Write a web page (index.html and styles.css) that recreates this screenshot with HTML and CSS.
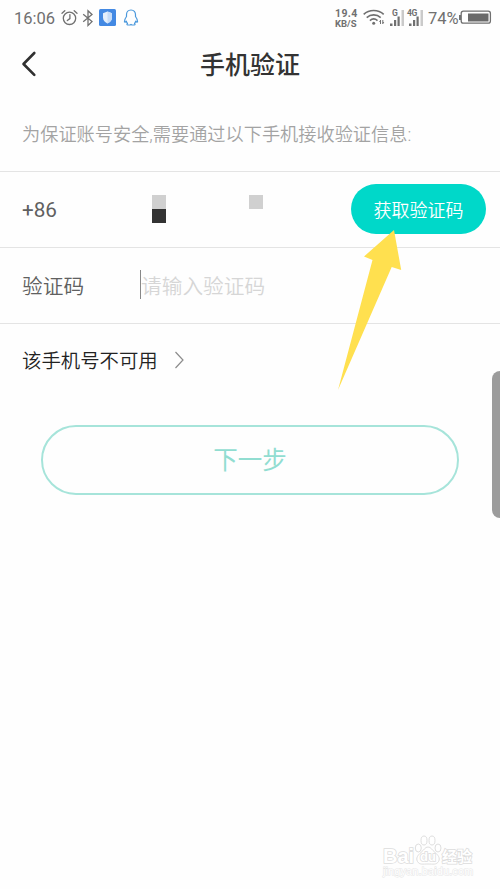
FILE: index.html
```html
<!DOCTYPE html>
<html lang="zh-CN">
<head>
<meta charset="utf-8">
<title>手机验证</title>
<link rel="stylesheet" href="styles.css">
</head>
<body>
<div class="status">
  <span class="time">16:06</span>
  <svg class="alarm" width="17" height="18" viewBox="0 0 17 18" fill="none" stroke="#707070" stroke-width="1.3" stroke-linecap="round"><circle cx="8.5" cy="9.3" r="6.2"/><path d="M8.9 5.6v4l-2.6 2M1 4.2 3.8 1.7M13.2 1.7 16 4.2"/></svg>
  <svg class="bt" width="12" height="18" viewBox="0 0 12 18" fill="none" stroke="#707070" stroke-width="1.3"><path d="M1.2 5.2 10 12.600 6 16.400V1.800L10 5.400 1.200 12.800"/></svg>
  <svg class="shield" width="17" height="17" viewBox="0 0 17 17"><rect width="17" height="17" rx="1.5" fill="#4389e3"/><path d="M8.500 2.500 13 4.200v4.600c0 2.800-2.200 4.700-4.500 5.700C6.200 13.500 4 11.600 4 8.800V4.200z" fill="#e4effc"/><path d="M8.500 2.500 13 4.200v4.600c0 2.800-2.200 4.700-4.500 5.700z" fill="#c6dcf8"/></svg>
  <svg class="qq" width="16" height="17" viewBox="0 0 16 17" fill="none" stroke="#4a98dc" stroke-width="1.200" stroke-linejoin="round"><path d="M8 1C5 1 3.500 3.100 3.500 5.800v1.700C2.200 9.200 1.200 11 1.400 13l.9.200 1-1c.2 1 .6 1.700 1.200 2.300-.8.400-.8 1.500.3 1.500h2c.8 0 .8-.7 1.200-.7s.4.700 1.200.7h2c1.100 0 1.100-1.100.3-1.500.6-.6 1-1.300 1.200-2.300l1 1 .9-.2c.2-2-.8-3.800-2.100-5.500V5.800C12.500 3.100 11 1 8 1z"/></svg>
  <span class="speed"><span>19.4</span><span class="unit">KB/S</span></span>
  <svg class="wifi" width="22" height="17" viewBox="0 0 22 17" fill="none" stroke="#707070" stroke-width="1.600"><path d="M.7 5.300c5.500-5 14.500-5 20 0M3.700 8.600c4-3.600 10-3.600 14 0M6.900 11.600c2.300-2 5.300-2 7.600 0"/><circle cx="10.700" cy="14.200" r="1.500" fill="#707070" stroke="none"/><path d="M17.500 11v4M19.800 11v4" stroke-width="1"/><path d="m16 13 1.500-2v2zM21.300 13l-1.500 2v-2z" fill="#707070" stroke="none"/></svg>
  <span class="signal"><i class="net">G</i><svg width="14" height="18" viewBox="0 0 14 18"><path fill="#707070" d="M0 14.500h2.500V17H0zM4 11h2.200v6H4zM7.500 7.500h2.200V17H7.500z"/><path fill="#cacaca" d="M11.500 1H14v16h-2.500z"/></svg></span>
  <span class="signal lte"><i class="net">4G</i><svg width="14" height="18" viewBox="0 0 14 18"><path fill="#707070" d="M0 14.500h2.500V17H0zM4 11h2.200v6H4zM7.500 7.500h2.200V17H7.500z"/><path fill="#cacaca" d="M11.500 1H14v16h-2.500z"/></svg></span>
  <span class="percent">74%</span>
  <svg class="battery" width="33" height="15" viewBox="0 0 33 15"><path d="M0 5h2v5H0z" fill="#707070"/><rect x="2.200" y="1.200" width="29.200" height="12" rx="2.200" fill="none" stroke="#707070" stroke-width="1.300"/><path d="M9 3.500h20.500v8H9z" fill="#6a6a6a"/></svg>
</div>
<header class="header">
  <svg class="back" width="16" height="28" viewBox="0 0 16 28" fill="none" stroke="#303030" stroke-width="2.600" stroke-linecap="round" stroke-linejoin="round"><path d="M13.300 3 2.500 14l10.800 10.800"/></svg>
  <h1>手机验证</h1>
</header>
<main>
  <p class="hint">为保证账号安全,需要通过以下手机接收验证信息:</p>
  <section class="row">
    <span class="label code">+86</span>
    <span class="number"><i class="mask"></i><i class="mask short"></i></span>
    <button class="get">获取验证码</button>
  </section>
  <section class="row">
    <span class="label">验证码</span>
    <span class="field">请输入验证码</span>
  </section>
  <a class="unavailable">该手机号不可用<svg width="11" height="18" viewBox="0 0 11 18" fill="none" stroke="#8c8c8c" stroke-width="1.200"><path d="m1.500 1 7.500 8-7.500 8"/></svg></a>
  <button class="next">下一步</button>
</main>
<svg class="arrow" width="68" height="162" viewBox="0 0 68 162"><path d="M59 1 66.200 41l-9.500-3L3 161 37.500 31 29 27.500z" fill="#ffe04f"/></svg>
<div class="handle"></div>
<div class="watermark">
  <div class="brand"><span class="bai">Bai</span><svg class="paw" width="28" height="30" viewBox="0 0 28 30" fill="#fff" stroke="#dedede" stroke-width="1"><ellipse cx="4.300" cy="13" rx="3" ry="4"/><ellipse cx="10" cy="5.500" rx="3" ry="4.500"/><ellipse cx="18" cy="5.500" rx="3" ry="4.500"/><ellipse cx="24" cy="13" rx="3" ry="4"/><path d="M14 12c-3 0-4 3-7 5.500S1.500 23 3.500 26.500 9 29 14 29s8.500 1 10.500-2.500-.5-6.500-3.500-9S17 12 14 12z"/></svg><span class="cn">经验</span><b class="du">du</b></div>
  <div class="url">jingyan.baidu.com</div>
</div>
</body>
</html>
```
FILE: styles.css
```css
* { box-sizing: border-box; }
body {
  margin: 0;
  position: relative;
  height: 889px;
  overflow: hidden;
  background: #fefefe;
  color: #333;
  font-family: Roboto, "Noto Sans CJK SC", sans-serif;
}
i { font-style: normal; }
button { font-family: inherit; padding: 0; }
svg { flex: none; display: block; }

.status {
  display: flex;
  align-items: center;
  height: 35px;
  padding: 0 8px 0 14px;
  color: #707070;
}
.time { width: 47px; font-size: 16.5px; line-height: 20px; padding-top: 2px; }
.bt { margin-left: 4px; }
.shield { margin-left: 5px; }
.qq { margin-left: 7px; }
.speed {
  display: flex;
  flex-direction: column;
  margin-left: auto;
  width: 28px;
  padding-top: 1px;
  font-size: 10.500px;
  font-weight: 700;
  line-height: 10px;
  letter-spacing: .4px;
  white-space: nowrap;
}
.speed .unit { font-size: 9.500px; line-height: 9px; letter-spacing: 0; }
.signal { position: relative; margin-left: 5px; }
.net {
  position: absolute;
  left: 2px;
  top: 0;
  font-size: 8.500px;
  font-weight: 700;
  line-height: 8px;
  letter-spacing: -.4px;
}
.lte .net { left: -2px; }
.percent { margin-left: 5px; width: 31px; font-size: 16.500px; line-height: 20px; padding-top: 2px; }

.header {
  display: grid;
  grid-template-columns: 40px 1fr 40px;
  align-items: center;
  height: 58px;
}
.back { margin-left: 21px; }
h1 { margin: 0; padding-top: 3px; text-align: center; font-size: 25px; font-weight: 500; line-height: 36px; }

.hint {
  margin: 0;
  height: 79px;
  padding: 28px 22px 0;
  border-bottom: 1px solid #e4e4e4;
  font-size: 18.200px;
  line-height: 28px;
  font-weight: 350;
  color: #a3a3a3;
  white-space: nowrap;
}
.row {
  display: flex;
  align-items: center;
  height: 76px;
  padding: 0 14px 2px 22px;
  border-bottom: 1px solid #e4e4e4;
}
.label { width: 118px; font-size: 20.700px; line-height: 30px; padding-top: 4px; color: #606060; font-weight: 350; }
.code { font-weight: 400; padding-top: 2px; }
.number { display: flex; gap: 83px; padding-left: 12px; }
.mask { width: 14px; height: 28px; background: linear-gradient(#d0d0d0 50%, #333 50%); }
.mask.short { height: 14px; background: #d0d0d0; }
.get {
  margin-left: auto;
  width: 135px;
  height: 50px;
  border: 0;
  border-radius: 25px;
  background: #00d8c9;
  color: #fff;
  font-size: 18px;
  font-weight: 350;
}
.field {
  border-left: 1px solid #888;
  height: 29px;
  line-height: 34px;
  font-size: 20.700px;
  font-weight: 350;
  color: #d6d6d6;
}
.unavailable {
  display: flex;
  align-items: center;
  gap: 16px;
  height: 71px;
  padding-left: 22px;
  font-size: 19.400px;
  font-weight: 350;
  color: #222;
}
.next {
  display: block;
  margin: 30px 41px 0;
  width: 418px;
  height: 70px;
  padding-bottom: 3px;
  border: 2px solid #a6e4da;
  border-radius: 35px;
  background: transparent;
  color: #91ddd1;
  font-size: 24.500px;
  font-weight: 400;
}
.arrow { position: absolute; left: 335px; top: 229px; }
.handle {
  position: absolute;
  right: 0;
  top: 371px;
  width: 8px;
  height: 147px;
  border-radius: 9px 0 0 9px;
  background: #9c9c9c;
}
.watermark {
  position: absolute;
  left: 383px;
  top: 835px;
  color: #fff;
  -webkit-text-stroke: 1.500px #dcdcdc;
  paint-order: stroke fill;
}
.paw { paint-order: normal; }
.brand {
  position: relative;
  display: flex;
  align-items: flex-end;
  height: 30px;
  font: 700 20px/18px "Liberation Sans", sans-serif;
}
.bai { width: 31px; }
.cn { font: 700 15px/18px "Noto Sans CJK SC", sans-serif; }
.du { position: absolute; left: 37px; bottom: 0; font-size: 13px; line-height: 16px; }
.url { font: 11px/13px "Liberation Sans", sans-serif; letter-spacing: .1px; -webkit-text-stroke: 1px #e6e6e6; }
```
